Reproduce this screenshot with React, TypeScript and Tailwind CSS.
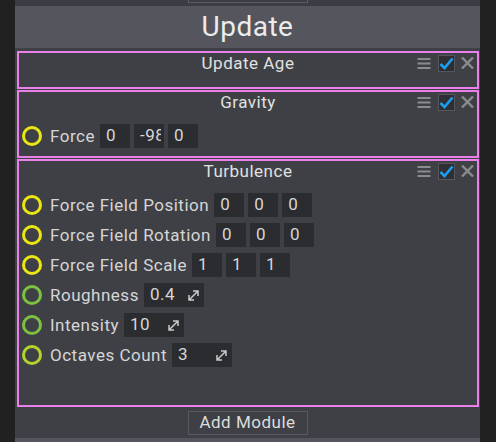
import React from "react";

type Row = {
  label: string;
  ring: string;
  values?: string[];
  scalar?: string;
};

const font = { fontFamily: "Roboto, 'Noto Sans', sans-serif" };

function ModuleIcons() {
  return (
    <div className="flex items-center justify-end gap-[6px] pr-[3px]">
      <svg width="14" height="13" viewBox="0 0 14 13" className="mr-[1px]">
        <rect x="0.5" y="1" width="13" height="2" fill="#8a8b8e" />
        <rect x="0.5" y="5.5" width="13" height="2" fill="#8a8b8e" />
        <rect x="0.5" y="10" width="13" height="2" fill="#8a8b8e" />
      </svg>
      <div className="w-[17px] h-[17px] bg-[#2e2f33] border border-[#56575c] flex items-center justify-center">
        <svg width="15" height="13" viewBox="0 0 15 13">
          <path d="M1.5 7 L5.5 11 L13.5 1.5" fill="none" stroke="#1a9ff0" strokeWidth="2.6" />
        </svg>
      </div>
      <svg width="13" height="12" viewBox="0 0 13 12">
        <path d="M1 0.5 L12 11.5 M12 0.5 L1 11.5" stroke="#8a8b8e" strokeWidth="2.4" />
      </svg>
    </div>
  );
}

function ExpandIcon() {
  return (
    <svg width="13" height="13" viewBox="0 0 13 13">
      <path
        d="M2 11 L11 2 M6 2 L11 2 L11 7 M2 6 L2 11 L7 11"
        fill="none"
        stroke="#c9c9c9"
        strokeWidth="1.5"
      />
    </svg>
  );
}

function FieldRow({ row }: { row: Row }) {
  return (
    <div className="flex items-center h-[24px] pl-[3px]">
      <div
        className="w-[20px] h-[20px] rounded-full border-[3px] shrink-0"
        style={{ borderColor: row.ring }}
      />
      <span className="ml-[8px] text-[17px] tracking-[0.5px] text-[#d6d6d6] leading-none whitespace-nowrap">
        {row.label}
      </span>
      {row.values && (
        <div className="flex gap-[4px] ml-[5px]">
          {row.values.map((v, i) => (
            <div
              key={i}
              className="w-[30px] h-[24px] bg-[#2b2c30] text-[17px] tracking-[0.5px] text-[#d6d6d6] pl-[6px] pr-[3px] flex items-center"
            >
              <span className="block w-full overflow-hidden whitespace-nowrap">{v}</span>
            </div>
          ))}
        </div>
      )}
      {row.scalar && (
        <div className="ml-[5px] w-[60px] h-[24px] bg-[#2b2c30] text-[17px] tracking-[0.5px] text-[#d6d6d6] pl-[6px] pr-[4px] flex items-center justify-between">
          <span>{row.scalar}</span>
          <ExpandIcon />
        </div>
      )}
    </div>
  );
}

function Module({ title, height, rows }: { title: string; height: string; rows: Row[] }) {
  return (
    <div className={`border-2 border-[#ea80ea] ${height}`}>
      <div className="grid grid-cols-[1fr_auto_1fr] items-center h-[20px]">
        <div />
        <div className="text-[17px] tracking-[0.5px] text-[#e0e0e0] leading-none">{title}</div>
        <ModuleIcons />
      </div>
      {rows.length > 0 && (
        <div className="flex flex-col gap-[6px] mt-[12px]">
          {rows.map((r) => (
            <FieldRow key={r.label} row={r} />
          ))}
        </div>
      )}
    </div>
  );
}

const YELLOW = "#ece612";
const GREEN = "#7cc141";
const LIME = "#b3d52b";

export default function App() {
  return (
    <div className="w-[496px] h-[442px] bg-[#212121] pl-[15px] overflow-hidden" style={font}>
      <div className="w-[465px] h-[442px] bg-[#3f4045] flex flex-col">
        <div className="h-[6px] bg-[#3c3d42]">
          <div className="ml-[173px] w-[120px] h-[3px] border-x border-b border-[#5c5d62]" />
        </div>
        <div className="h-[42px] bg-[#55565d] flex items-center justify-center text-[28px] tracking-[0.5px] text-[#ececec]">
          Update
        </div>
        <div className="flex flex-col gap-[1px] pl-[2px] pr-[1px] pt-[3px]">
          <Module title="Update Age" height="h-[38px]" rows={[]} />
          <Module
            title="Gravity"
            height="h-[68px]"
            rows={[{ label: "Force", ring: YELLOW, values: ["0", "-98", "0"] }]}
          />
          <Module
            title="Turbulence"
            height="h-[248px]"
            rows={[
              { label: "Force Field Position", ring: YELLOW, values: ["0", "0", "0"] },
              { label: "Force Field Rotation", ring: YELLOW, values: ["0", "0", "0"] },
              { label: "Force Field Scale", ring: YELLOW, values: ["1", "1", "1"] },
              { label: "Roughness", ring: GREEN, scalar: "0.4" },
              { label: "Intensity", ring: GREEN, scalar: "10" },
              { label: "Octaves Count", ring: LIME, scalar: "3" },
            ]}
          />
        </div>
        <div className="flex justify-center mt-[4px]">
          <div className="w-[120px] h-[24px] border border-[#5a5b60] flex items-center justify-center text-[17px] tracking-[0.5px] text-[#dcdcdc]">
            Add Module
          </div>
        </div>
        <div className="mt-auto h-[4px] bg-[#55565d]" />
      </div>
    </div>
  );
}
